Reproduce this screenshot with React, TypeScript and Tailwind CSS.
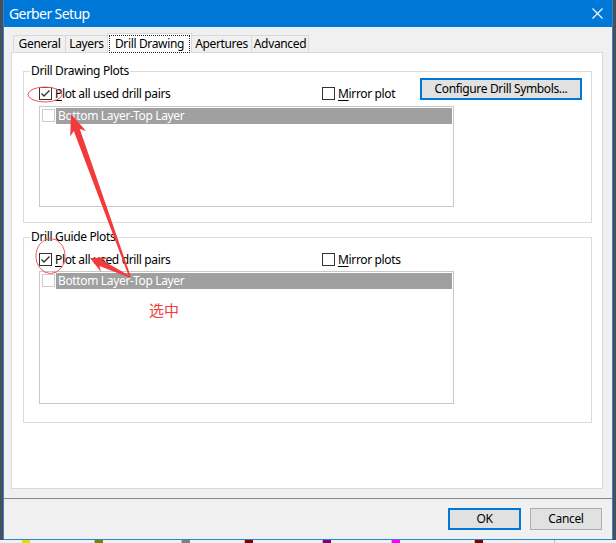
import React from 'react';

const font = { fontFamily: '"Noto Sans", "Liberation Sans", sans-serif', letterSpacing: '-0.35px' };

type Pt = [number, number];

// tapered annotation arrow, tail -> tip
function arrowPoints(tail: Pt, tip: Pt, headLen: number, headHalf: number, shaftHalf: number, tailHalf: number) {
  const dx = tip[0] - tail[0];
  const dy = tip[1] - tail[1];
  const len = Math.hypot(dx, dy);
  const ux = dx / len;
  const uy = dy / len;
  const nx = -uy;
  const ny = ux;
  const bx = tip[0] - ux * headLen;
  const by = tip[1] - uy * headLen;
  const jx = tip[0] - ux * (headLen - 4);
  const jy = tip[1] - uy * (headLen - 4);
  const pts: Pt[] = [
    [tail[0] + nx * tailHalf, tail[1] + ny * tailHalf],
    [jx + nx * shaftHalf, jy + ny * shaftHalf],
    [bx + nx * headHalf, by + ny * headHalf],
    tip,
    [bx - nx * headHalf, by - ny * headHalf],
    [jx - nx * shaftHalf, jy - ny * shaftHalf],
    [tail[0] - nx * tailHalf, tail[1] - ny * tailHalf],
  ];
  return pts.map((p) => `${p[0].toFixed(1)},${p[1].toFixed(1)}`).join(' ');
}

function CheckBox({ checked, faint }: { checked?: boolean; faint?: boolean }) {
  return (
    <div
      className={`w-[13px] h-[13px] shrink-0 bg-white border ${faint ? 'border-[#cccccc]' : 'border-[#333333]'} flex items-center justify-center`}
    >
      {checked && (
        <svg width="11" height="11" viewBox="0 0 11 11">
          <polyline points="1.5,5.5 4,8 9.5,2.5" fill="none" stroke="#333" strokeWidth="1.4" />
        </svg>
      )}
    </div>
  );
}

function CheckLabel({ checked, first, rest, width }: { checked?: boolean; first: string; rest: string; width: string }) {
  return (
    <div className={`flex items-center h-[13px] mt-[15px] ${width}`}>
      <CheckBox checked={checked} />
      <span className="ml-[3px] text-[12px] leading-[13px] text-black whitespace-nowrap">
        <span className="underline underline-offset-[2px]">{first}</span>
        {rest}
      </span>
    </div>
  );
}

function LayerList({ height }: { height: string }) {
  return (
    <div className={`w-[415px] ${height} border border-[#c8c8c8] bg-white pt-[1px] pl-[2px] pr-[1px]`}>
      <div className="flex h-[16px]">
        <div className="mt-[1px]">
          <CheckBox faint />
        </div>
        <div className="flex-1 ml-[1px] bg-[#a0a0a0] text-white text-[12px] leading-[16px] pl-[2px] whitespace-nowrap">
          Bottom Layer-Top Layer
        </div>
      </div>
    </div>
  );
}

function GroupBox({ title, height, children }: { title: string; height: string; children: React.ReactNode }) {
  return (
    <div className={`relative w-[569px] ${height} border border-[#dcdcdc] pl-[15px]`}>
      <span className="absolute -top-[9px] left-[6px] px-[1px] bg-white text-[12px] leading-[16px] text-black">{title}</span>
      {children}
    </div>
  );
}

const tabs = [
  { label: 'General', w: 'w-[53px]' },
  { label: 'Layers', w: 'w-[43px]' },
  { label: 'Drill Drawing', w: 'w-[85px]', active: true },
  { label: 'Apertures', w: 'w-[61px]' },
  { label: 'Advanced', w: 'w-[58px]' },
];

const layers = [
  { color: 'bg-[#e0e000]', w: 'w-[73px]' },
  { color: 'bg-[#808000]', w: 'w-[87px]' },
  { color: 'bg-[#808080]', w: 'w-[63px]' },
  { color: 'bg-[#800000]', w: 'w-[78px]' },
  { color: 'bg-[#800080]', w: 'w-[69px]' },
  { color: 'bg-[#ff00ff]', w: 'w-[83px]' },
  { color: 'bg-[#800000]', w: 'w-[80px]' },
];

export default function App() {
  return (
    <div className="relative w-[616px] h-[543px] bg-[#4a4f56] flex flex-col overflow-hidden" style={font}>
      <div className="ml-[3px] w-[610px] h-[540px] border-x border-b border-[#2a83d6] bg-[#f0f0f0] flex flex-col">
        {/* title bar */}
        <div className="h-[27px] bg-[#0078d7] flex items-center justify-between pl-[5px] pr-[9px] text-white">
          <span className="text-[14px] leading-[20px] tracking-[-0.6px]">Gerber Setup</span>
          <svg width="11" height="11" viewBox="0 0 11 11">
            <path d="M0.5 0.5 L10.5 10.5 M10.5 0.5 L0.5 10.5" stroke="#fff" strokeWidth="1.1" />
          </svg>
        </div>

        {/* tabs */}
        <div className="mt-[6px] ml-[9px] h-[19px] flex items-end">
          {tabs.map((t) =>
            t.active ? (
              <div
                key={t.label}
                className={`${t.w} h-[20px] -mb-[1px] -ml-[1px] relative z-10 bg-white border-x border-t border-[#d9d9d9] px-[1px] pt-[1px]`}
              >
                <div className="h-full border border-dotted border-[#222] text-[12px] leading-[16px] text-center text-black">
                  {t.label}
                </div>
              </div>
            ) : (
              <div
                key={t.label}
                className={`${t.w} h-[17px] -ml-[1px] first:ml-0 border-x border-t border-[#d9d9d9] bg-[#f0f0f0] text-[12px] leading-[16px] text-center text-black`}
              >
                {t.label}
              </div>
            )
          )}
        </div>

        {/* tab panel */}
        <div className="ml-[7px] w-[592px] h-[437px] border border-[#d9d9d9] bg-white pl-[11px]">
          <div className="mt-[18px]">
            <GroupBox title="Drill Drawing Plots" height="h-[152px]">
              <div className="flex items-start h-[28px]">
                <CheckLabel checked first="P" rest="lot all used drill pairs" width="w-[283px]" />
                <CheckLabel first="M" rest="irror plot" width="w-[98px]" />
                <button className="mt-[6px] w-[162px] h-[22px] border-2 border-[#0078d7] bg-[#e1e1e1] text-[12px] leading-[16px] text-black">
                  Configure Drill Symbols...
                </button>
              </div>
              <div className="mt-[6px]">
                <LayerList height="h-[101px]" />
              </div>
            </GroupBox>
          </div>
          <div className="mt-[14px]">
            <GroupBox title="Drill Guide Plots" height="h-[186px]">
              <div className="flex items-start h-[28px]">
                <CheckLabel checked first="P" rest="lot all used drill pairs" width="w-[283px]" />
                <CheckLabel first="M" rest="irror plots" width="w-[98px]" />
              </div>
              <div className="mt-[5px]">
                <LayerList height="h-[133px]" />
              </div>
            </GroupBox>
          </div>
        </div>

        {/* separator + buttons */}
        <div className="mt-[9px] h-[1px] bg-[#8a8a8a]" />
        <div className="mt-[9px] flex justify-end gap-[9px] pr-[10px]">
          <button className="w-[73px] h-[22px] border-2 border-[#0078d7] bg-[#e1e1e1] text-[12px] leading-[16px] text-black">OK</button>
          <button className="w-[72px] h-[22px] border border-[#adadad] bg-[#e1e1e1] text-[12px] leading-[16px] text-black">Cancel</button>
        </div>
      </div>

      {/* layer tab strip of the app underneath (only its top edge shows) */}
      <div className="h-[3px] overflow-hidden bg-[#f0f0f0] flex pl-[22px]">
        {layers.map((l, i) => (
          <div key={i} className={`${l.w} shrink-0 flex items-start border-r border-[#bbbbbb]`}>
            <div className={`w-[8px] h-[8px] ${l.color}`} />
          </div>
        ))}
      </div>

      {/* red annotations */}
      <svg className="absolute inset-0 pointer-events-none" width="616" height="543" viewBox="0 0 616 543">
        <ellipse cx="45" cy="94.5" rx="17" ry="7.5" fill="none" stroke="#f25555" strokeWidth="1" />
        <ellipse cx="50.5" cy="256" rx="14.5" ry="17.5" fill="none" stroke="#f25555" strokeWidth="1" />
        <polygon points={arrowPoints([130, 277], [71, 114], 21, 8.5, 3.2, 0.8)} fill="#f23a3a" />
        <polygon points={arrowPoints([130, 277], [90, 258], 16, 8, 3.2, 0.8)} fill="#f23a3a" />
      </svg>
      <span
        className="absolute left-[149px] top-[301px] text-[15px] leading-[18px] text-[#f03c3c]"
        style={{ fontFamily: '"Noto Sans CJK SC", sans-serif', letterSpacing: '0px' }}
      >
        选中
      </span>
    </div>
  );
}
